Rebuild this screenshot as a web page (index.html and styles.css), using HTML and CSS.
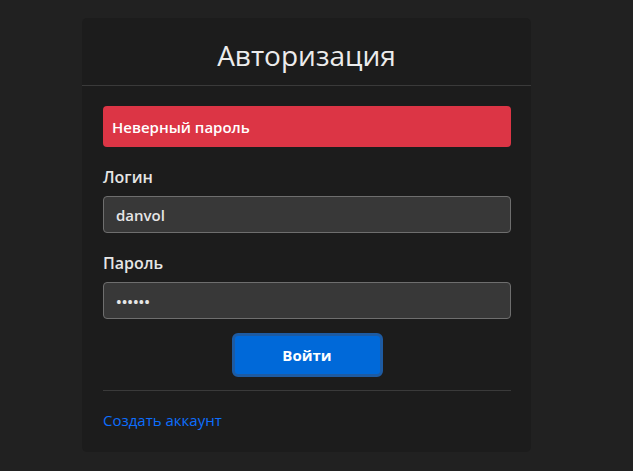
FILE: index.html
```html
<!DOCTYPE html>
<html lang="ru">
<head>
<meta charset="utf-8">
<link rel="stylesheet" href="styles.css">
</head>
<body>
<div class="page">
  <div class="card">
    <div class="card-header"><h1 class="title">Авторизация</h1></div>
    <div class="card-body">
      <div class="alert">Неверный пароль</div>
      <label class="label" for="login">Логин</label>
      <input class="input" id="login" type="text" value="danvol">
      <label class="label" for="pass">Пароль</label>
      <input class="input" id="pass" type="password" value="secret">
      <div class="actions"><button class="btn">Войти</button></div>
      <hr class="divider">
      <a class="link" href="#">Создать аккаунт</a>
    </div>
  </div>
</div>
</body>
</html>
```
FILE: styles.css
```css
html, body { margin: 0; padding: 0; }
body {
  background: #212121;
  font-family: "Open Sans", "DejaVu Sans", sans-serif;
  color: #e6e6e6;
}
.page {
  display: flex;
  justify-content: center;
  padding-top: 18px;
  padding-right: 20px;
}
.card {
  width: 449px;
  height: 434px;
  background: #1c1c1c;
  border-radius: 5px;
  box-sizing: border-box;
}
.card-header {
  height: 68px;
  border-bottom: 1px solid #3a3a3a;
  display: flex;
  align-items: center;
  justify-content: center;
  box-sizing: border-box;
}
.title {
  margin: 0;
  font-size: 28px;
  font-weight: 500;
  color: #ececec;
  padding-top: 6px;
}
.card-body {
  padding: 20px 20px 0 21px;
  display: flex;
  flex-direction: column;
}
.alert {
  height: 41px;
  background: #dc3545;
  border-radius: 4px;
  color: #fff;
  font-size: 15px;
  font-weight: 600;
  display: flex;
  align-items: center;
  padding-left: 9px;
  box-sizing: border-box;
}
.label {
  margin-top: 19px;
  height: 30px;
  font-size: 16px;
  font-weight: 600;
  color: #e6e6e6;
}
.input {
  height: 37px;
  box-sizing: border-box;
  background: #383838;
  border: 1px solid #6e6e6e;
  border-radius: 4px;
  color: #e6e6e6;
  font-family: inherit;
  font-size: 15px;
  font-weight: 600;
  padding: 0 12px;
  margin: 0;
  width: 100%;
}
.actions {
  display: flex;
  justify-content: center;
  margin-top: 14px;
}
.btn {
  width: 151px;
  height: 44px;
  background: #0069d9;
  border: 3px solid #1d5ba3;
  border-radius: 6px;
  color: #fff;
  font-family: inherit;
  font-size: 15px;
  font-weight: 700;
}
.divider {
  margin: 13px 0 0;
  border: 0;
  border-top: 1px solid #3a3a3a;
}
.link {
  margin-top: 19px;
  color: #0d6efd;
  text-decoration: none;
  font-size: 15px;
  font-weight: 500;
  align-self: flex-start;
}
```
